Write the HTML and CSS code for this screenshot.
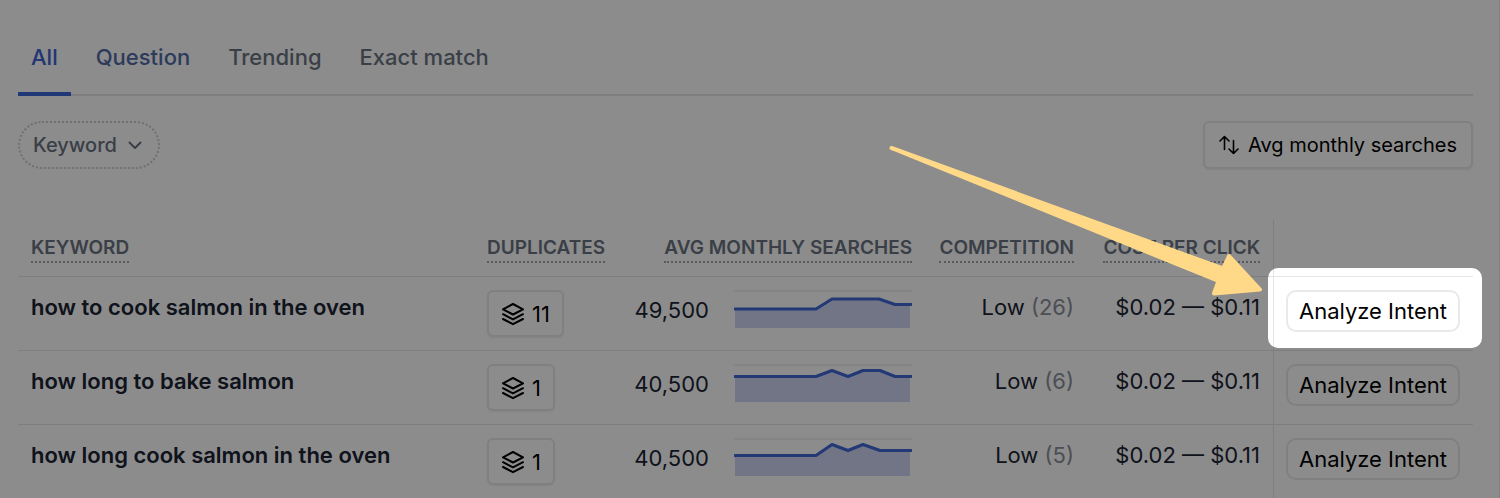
FILE: index.html
```html
<!DOCTYPE html>
<html lang="en">
<head>
<meta charset="utf-8">
<title>Keyword ideas</title>
<link rel="stylesheet" href="styles.css">
</head>
<body>
<svg class="defs" aria-hidden="true">
  <symbol id="layers" viewBox="0 0 24 24">
    <path d="M12 2 2 7.300 12 12.500l10-5.200z"/>
    <path d="m2 12.200 10 5.200 10-5.200"/>
    <path d="m2 17 10 5.200L22 17"/>
  </symbol>
</svg>
<main class="page">
  <nav class="tabs">
    <a class="tab tab-active" href="#all">All</a>
    <a class="tab tab-hover" href="#question">Question</a>
    <a class="tab" href="#trending">Trending</a>
    <a class="tab" href="#exact">Exact match</a>
  </nav>
  <div class="toolbar">
    <button class="filter" type="button">Keyword
      <svg class="chevron" viewBox="0 0 14 14" aria-hidden="true"><path d="m1.500 4.500 5.500 5.500 5.500-5.500"/></svg>
    </button>
    <button class="sort" type="button">
      <svg class="sort-icon" viewBox="0 0 20 20" aria-hidden="true"><path d="M5.500 14.500V1.500M1 6l4.500-4.500L10 6M14.500 5.500v13M10 14l4.500 4.500L19 14"/></svg>
      Avg monthly searches
    </button>
  </div>
  <table class="results">
    <colgroup><col><col class="col-dup"><col class="col-avg"><col class="col-comp"><col class="col-cost"><col class="col-act"></colgroup>
    <thead>
      <tr>
        <th><span class="hint">KEYWORD</span></th>
        <th><span class="hint">DUPLICATES</span></th>
        <th class="right"><span class="hint">AVG MONTHLY SEARCHES</span></th>
        <th class="right"><span class="hint">COMPETITION</span></th>
        <th class="right"><span class="hint">COST PER CLICK</span></th>
        <td class="action"></td>
      </tr>
    </thead>
    <tbody>
      <tr>
        <td class="keyword">how to cook salmon in the oven</td>
        <td><button class="dup" type="button"><svg class="layers" aria-hidden="true"><use href="#layers"/></svg>11</button></td>
        <td><div class="volume">49,500
          <svg class="spark" viewBox="0 0 178 38" aria-hidden="true"><path class="grid" d="M0 1h178"/><path class="area" d="M1 19h81l16-9h47l16 5h15v23H1z"/><path class="line" d="M1 19h81l16-10h47l16 5.500h16"/></svg></div></td>
        <td class="right">Low <span class="muted">(26)</span></td>
        <td class="right">$0.02 — $0.11</td>
        <td class="action">
          <div class="focus">
            <button class="analyze" type="button">Analyze Intent</button>
            <div class="spotlight"></div>
            <svg class="arrow" viewBox="0 0 374 152" aria-hidden="true"><path d="M3.500 3 335 123.500 341 111l31 33.500-46 4 4.500-12.500z"/></svg>
          </div>
        </td>
      </tr>
      <tr>
        <td class="keyword">how long to bake salmon</td>
        <td><button class="dup" type="button"><svg class="layers" aria-hidden="true"><use href="#layers"/></svg>1</button></td>
        <td><div class="volume">40,500
          <svg class="spark" viewBox="0 0 178 38" aria-hidden="true"><path class="grid" d="M0 1h178"/><path class="area" d="M1 12.500h81l16-6 16 6 15-6h17l15 6h15V38H1z"/><path class="line" d="M1 12.500h81l16-6 16 6 15-6h17l15 6h16"/></svg></div></td>
        <td class="right">Low <span class="muted">(6)</span></td>
        <td class="right">$0.02 — $0.11</td>
        <td class="action"><button class="analyze" type="button">Analyze Intent</button></td>
      </tr>
      <tr>
        <td class="keyword">how long cook salmon in the oven</td>
        <td><button class="dup" type="button"><svg class="layers" aria-hidden="true"><use href="#layers"/></svg>1</button></td>
        <td><div class="volume">40,500
          <svg class="spark" viewBox="0 0 178 38" aria-hidden="true"><path class="grid" d="M0 1h178"/><path class="area" d="M1 17.500h81l16-11 16 6 15-6 17 6h30V38H1z"/><path class="line" d="M1 17.500h81l16-11 16 6 15-6 17 6h31"/></svg></div></td>
        <td class="right">Low <span class="muted">(5)</span></td>
        <td class="right">$0.02 — $0.11</td>
        <td class="action"><button class="analyze" type="button">Analyze Intent</button></td>
      </tr>
    </tbody>
  </table>
</main>
</body>
</html>
```
FILE: styles.css
```css
* { box-sizing: border-box; }
body {
  margin: 0;
  background: #fff;
  color: #1a2333;
  font-family: Inter, "Liberation Sans", sans-serif;
  font-size: 22px;
  overflow: hidden;
}
button { font: inherit; color: #000; background: #fff; border: 2px solid #e8e9eb; cursor: pointer; }
svg { display: block; flex: none; fill: none; stroke: currentColor; stroke-linecap: round; stroke-linejoin: round; }
.defs { position: absolute; width: 0; height: 0; }
.page { padding: 20px 26px 0 18px; border-right: 1px solid #e9e9e9; }

.tabs { display: flex; gap: 12px; border-bottom: 2px solid #e5e6e9; }
.tab { padding: 20px 13px 18px; margin-bottom: -2px; line-height: 34px; border-bottom: 4px solid transparent; color: #6b7482; font-weight: 500; text-decoration: none; }
.tab-active { color: #3d63d2; border-color: #3d66d8; }
.tab-hover { color: #536ba8; }

.toolbar { display: flex; justify-content: space-between; padding: 25px 0 51px; }
.filter, .sort { display: flex; align-items: center; height: 48px; padding: 0 13px; font-size: 20px; }
.filter { gap: 11px; padding-right: 16px; border: 2px dotted #c9ccd1; border-radius: 24px; color: #6b7280; font-weight: 500; }
.chevron { width: 14px; height: 14px; stroke-width: 2; }
.sort { gap: 9px; padding: 0 14px; border-radius: 6px; box-shadow: 0 1px 2px #0001; }
.sort-icon { width: 20px; height: 20px; stroke-width: 1.6; }

.results { width: 100%; table-layout: fixed; border-collapse: separate; border-spacing: 0; }
.col-dup { width: 138px; }
.col-avg { width: 313px; }
.col-comp { width: 162px; }
.col-cost { width: 186px; }
.col-act { width: 200px; }
.results th { height: 56px; padding: 15px 13px 0; text-align: left; vertical-align: top; color: #6b7482; font-size: 19px; font-weight: 600; white-space: nowrap; }
.hint { display: inline-block; line-height: 26px; border-bottom: 2px dotted #a0a5ad; }
.results tbody td { padding: 13px 13px; border-top: 1px solid #e5e6e9; vertical-align: top; line-height: 34px; white-space: nowrap; }
.results .right { text-align: right; }
.results .keyword { font-weight: 600; }
.results .action { border-left: 1px solid #e5e6e9; padding-left: 12px; }
.muted { color: #8a8f9a; }
.dup { display: flex; align-items: center; gap: 7px; height: 47px; padding: 0 12px; border-radius: 6px; box-shadow: 0 1px 2px #0001; }
.layers { width: 24px; height: 24px; stroke-width: 2; }
.volume { display: flex; justify-content: flex-end; gap: 25px; line-height: 40px; }
.spark { width: 178px; height: 38px; }
.grid { stroke: #e0e2e6; }
.area { fill: #d0d5f4; stroke: none; }
.line { stroke: #3e68d8; stroke-width: 3; }
.analyze { display: block; width: 100%; height: 42px; padding: 0; border-radius: 10px; }

/* Guided tour: dims the page around the highlighted button. */
.focus { position: relative; }
.spotlight { position: absolute; inset: -22px -22px -16px -18px; z-index: 1; border-radius: 10px; box-shadow: 0 0 0 2000px rgba(0, 0, 0, .45); pointer-events: none; }
.arrow { position: absolute; z-index: 2; top: -145px; right: calc(100% + 24px); width: 374px; height: 152px; color: #ffd987; pointer-events: none; }
.arrow path { fill: currentColor; stroke-width: 4; }
```
